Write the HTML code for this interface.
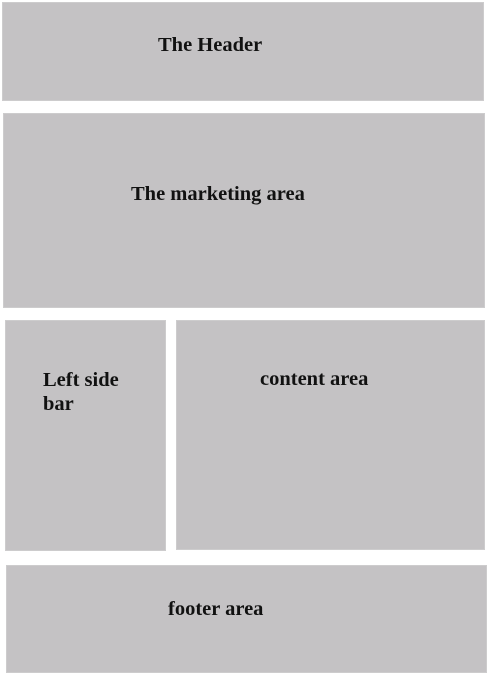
<!DOCTYPE html>
<html><head><style>
body{margin:0;width:488px;height:678px;background:#fff;position:relative;overflow:hidden;font-family:"Liberation Serif",serif;font-weight:bold;font-size:20.5px;color:#111}
.b{position:absolute;background:#c4c2c4;box-shadow:inset 0 0 0 1px #cdcccd}
.t{position:absolute;white-space:nowrap;line-height:24px}
</style></head><body>
<div class="b" style="left:2px;top:2px;width:482px;height:99px"></div>
<div class="b" style="left:3px;top:113px;width:482px;height:195px"></div>
<div class="b" style="left:5px;top:320px;width:161px;height:231px"></div>
<div class="b" style="left:176px;top:320px;width:309px;height:230px"></div>
<div class="b" style="left:6px;top:565px;width:481px;height:108px"></div>
<div class="t" style="left:158px;top:33px">The Header</div>
<div class="t" style="left:131px;top:182px">The marketing area</div>
<div class="t" style="left:43px;top:368px">Left side<br>bar</div>
<div class="t" style="left:260px;top:367px">content area</div>
<div class="t" style="left:168px;top:597px">footer area</div>
</body></html>
